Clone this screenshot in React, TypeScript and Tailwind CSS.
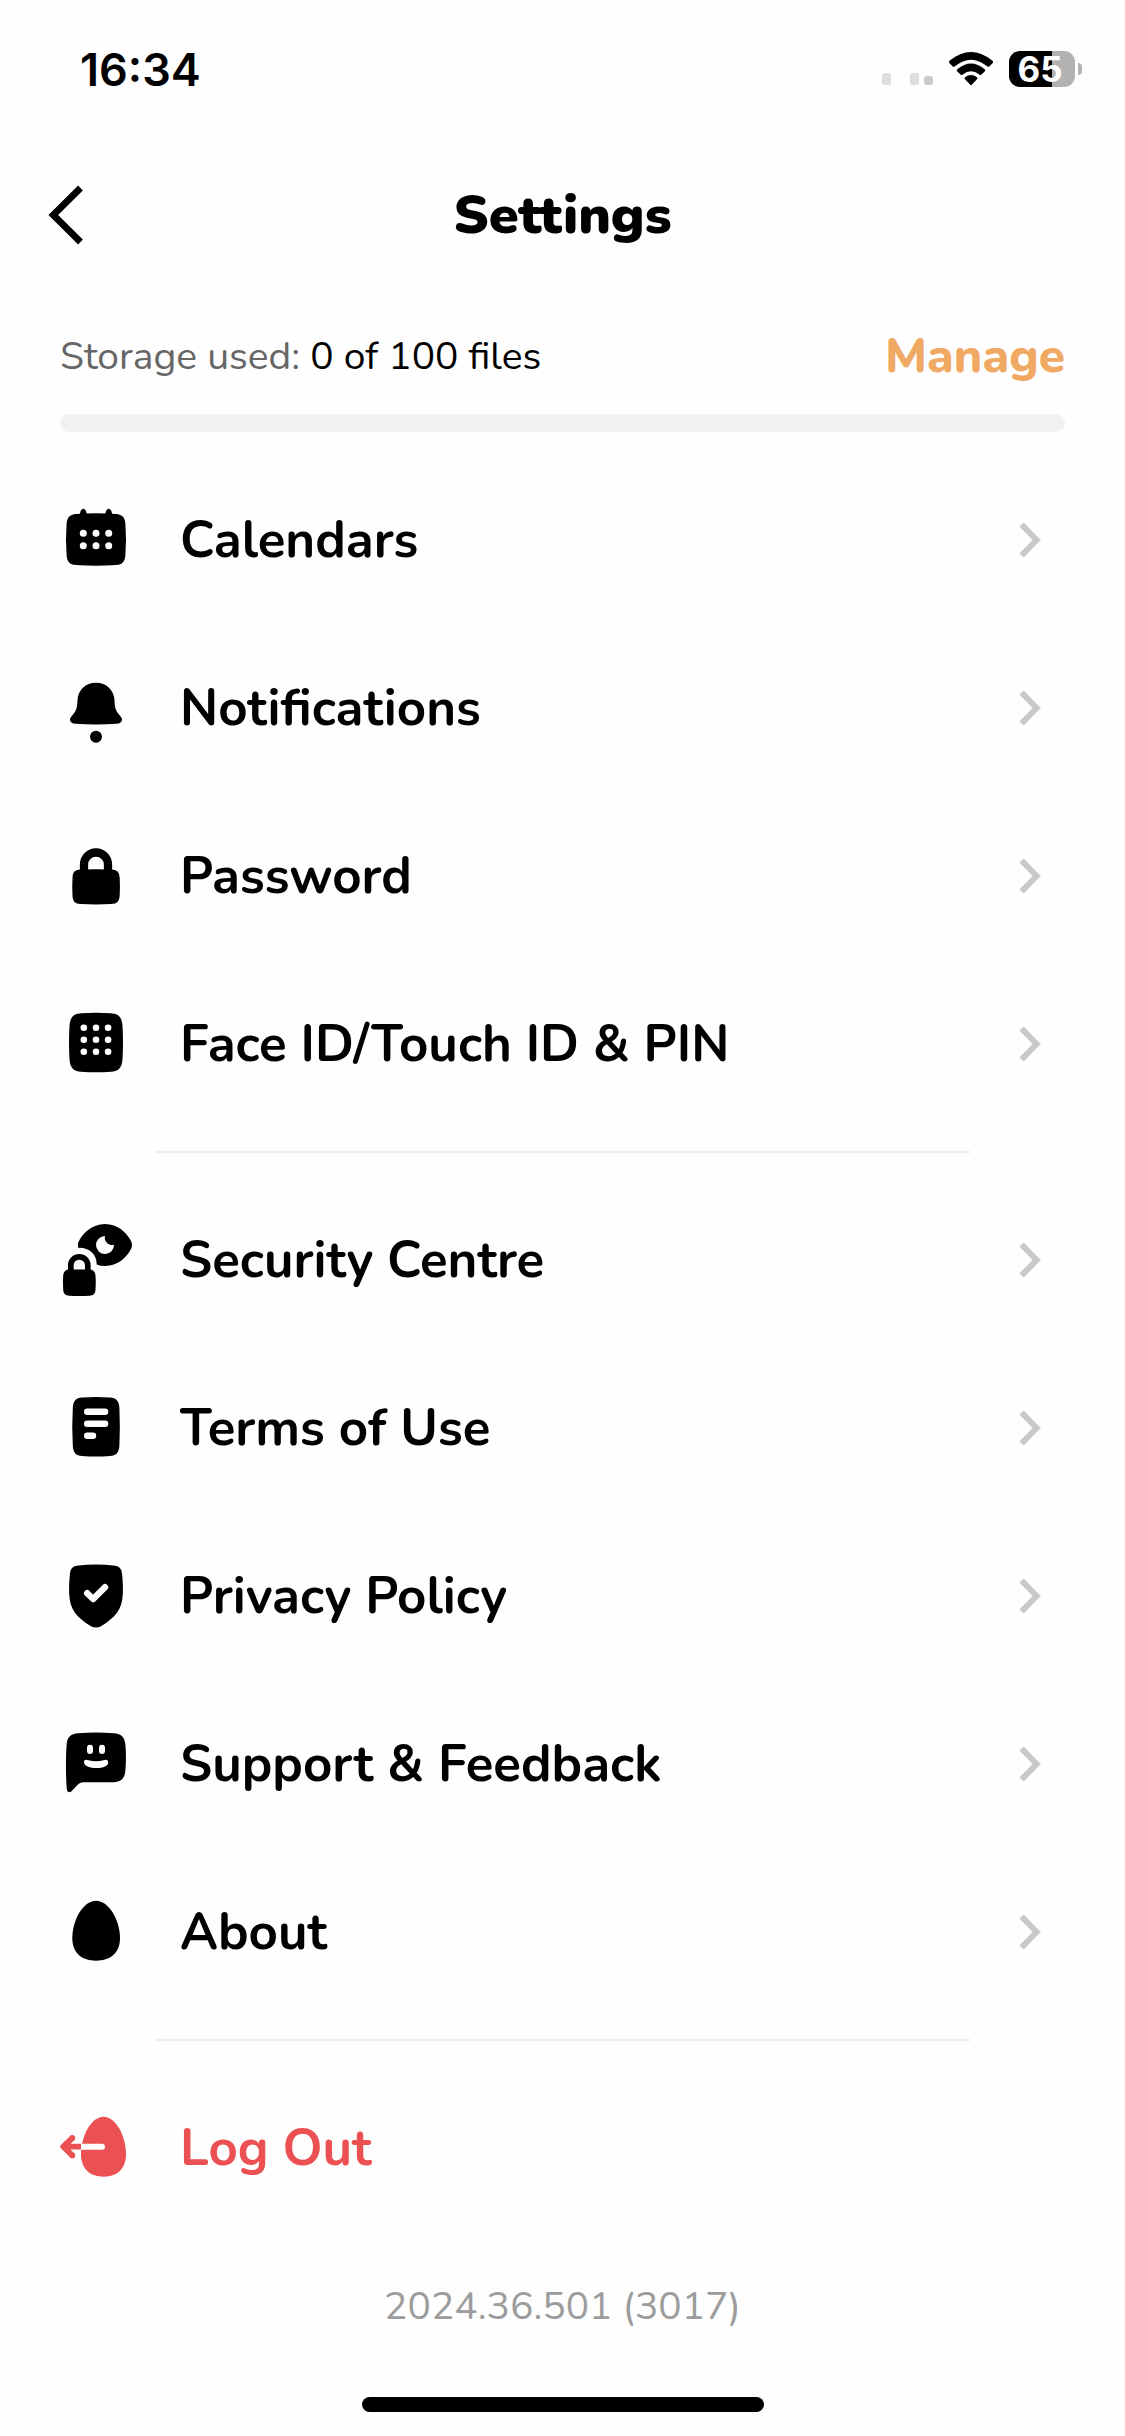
import type { ReactNode } from "react";

type Item = { label: string; icon: ReactNode };

function Icon({ children }: { children: ReactNode }) {
  return (
    <svg viewBox="0 0 72 72" className="size-18 shrink-0" fill="currentColor" aria-hidden="true">
      {children}
    </svg>
  );
}

function Dots({ xs, ys, r }: { xs: number[]; ys: number[]; r: number }) {
  return (
    <g fill="#fff">
      {ys.map((y) => xs.map((x) => <circle key={`${x}-${y}`} cx={x} cy={y} r={r} />))}
    </g>
  );
}

const calendarIcon = (
  <Icon>
    <path d="M6.6 20C7 13.5 9.5 10.4 16 9.9Q36 8.7 56 9.9C62.5 10.4 65 13.5 65.4 20Q66.6 35.5 65.4 51C65 57.5 62.5 60.6 56 61.1Q36 62.3 16 61.1C9.5 60.6 7 57.5 6.6 51Q5.4 35.5 6.6 20Z" />
    <path d="M19.5 11L20.7 6.8Q23.3 2.6 25.9 6.8L27.1 11ZM44.9 11L46.1 6.8Q48.7 2.6 51.3 6.8L52.5 11Z" />
    <Dots xs={[23.3, 36, 48.7]} ys={[29.3, 41.7]} r={3.5} />
  </Icon>
);

const bellIcon = (
  <Icon>
    <path d="M36 10.7C25.5 10.7 18 18 17.5 28C17.3 35 16.5 38.5 13 42.5C10.8 45 10 46 10 47.5C10 50.3 12 51.6 15.5 51.8Q36 53 56.5 51.8C60 51.6 62 50.3 62 47.5C62 46 61.2 45 59 42.5C55.5 38.5 54.7 35 54.5 28C54 18 46.5 10.7 36 10.7Z" />
    <circle cx="36" cy="64.7" r="6" />
  </Icon>
);

const lockIcon = (
  <Icon>
    <path d="M24 36V24.5a12 12 0 0 1 24 0V36" fill="none" stroke="#000" strokeWidth="8.3" />
    <path d="M20 29.6Q36 29 52 29.6C57.5 30 59.3 32.5 59.7 38Q60.2 47 59.7 55.5C59.3 61.5 57 63.7 51.5 64.1Q36 65 20.5 64.1C15 63.7 12.7 61.5 12.5 55.5Q12 47 12.5 38C12.7 32.5 14.5 30 20 29.6Z" />
  </Icon>
);

const keypadIcon = (
  <Icon>
    <path d="M9.5 18C10 9 13.5 5.7 21 5.2Q36 4.2 51 5.2C58.5 5.7 62 9 62.5 18Q63.5 34.5 62.5 51C62 60 58.5 63.3 51 63.8Q36 64.8 21 63.8C13.5 63.3 10 60 9.5 51Q8.5 34.5 9.5 18Z" />
    <Dots xs={[23.8, 36, 48.1]} ys={[19.7, 31.7, 43.7]} r={3.3} />
  </Icon>
);

const securityIcon = (
  <Icon>
    <path d="M18 23.7V19C22 9.5 32 0 45 0C58 0 66.5 8.5 71 17Q73 21 71 25C66.5 33.5 58 42 45 42Q40.5 42 36.6 40.4C37.2 30.5 29 23 18 23.7Z" />
    <path d="M45 12A9 9 0 1 0 54 20.8C49 22.3 43.5 17.5 45 12Z" fill="#fff" />
    <path d="M10.8 50V41.3a8.5 8.5 0 0 1 17 0V50" fill="none" stroke="#000" strokeWidth="5.7" />
    <path d="M9 45.6Q19.3 45.2 29.7 45.6C33.7 46 35.2 48 35.5 51.5Q36 58 35.5 65.5C35.2 69.7 33.5 71.5 29.5 71.8Q19.3 72.2 9.2 71.8C5.2 71.5 3.5 69.7 3.2 65.5Q2.8 58 3.2 51.5C3.5 48 5 46 9 45.6Z" />
  </Icon>
);

const termsIcon = (
  <Icon>
    <path d="M12.8 16C13.2 8.5 16 6 22 5.5Q36 4.5 50 5.5C56 6 59 8.5 59.4 16Q60.3 34.7 59.4 53.5C59 61 56 63.5 50 64Q36 65.2 22 64C16 63.5 13.2 61 12.8 53.5Q11.7 34.7 12.8 16Z" />
    <path d="M27.2 19.7H45.1M27.2 31.7H45.1M27.2 43.7H33" stroke="#fff" strokeWidth="6.4" strokeLinecap="round" />
  </Icon>
);

const shieldIcon = (
  <Icon>
    <path d="M9.8 15C10.3 8.5 12.5 6 18.5 5.5Q36 3.4 53.5 5.5C59.5 6 61.7 8.5 62.2 15Q63.3 25 62.8 34C62.3 49 55.5 57.5 41 66.2Q36 69 31 66.2C16.5 57.5 9.7 49 9.2 34Q8.7 25 9.8 15Z" />
    <path d="M27.2 33.2L33.2 39L45 27.2" fill="none" stroke="#fff" strokeWidth="6.4" strokeLinecap="round" strokeLinejoin="round" />
  </Icon>
);

const supportIcon = (
  <Icon>
    <path d="M6.6 16.5C7.2 9 11 5.7 18 5.2Q36 4 54 5.2C61 5.7 64.8 9 65.4 16.5Q66.5 29.5 65.4 42.5C64.8 50.5 61 53.8 54 54.2H23.5C20.5 54.2 19.5 55 17.5 56.9L12 62.7C9.5 65.5 6.8 64 6.7 60.5Q5.2 38 6.6 16.5Z" />
    <path d="M30 19.7V23M42 19.7V23" stroke="#fff" strokeWidth="6" strokeLinecap="round" />
    <path d="M24 34C24 31.4 26.5 31.3 28.5 32.2Q36 34.5 43.5 32.2C45.5 31.3 48.2 31.4 48.2 34.4C48.2 37.5 43.5 40 36 40C28.5 40 24 37.5 24 34Z" fill="#fff" />
  </Icon>
);

const eggIcon = (
  <Icon>
    <path d="M36 4.7C23 4.7 12.3 24.5 12.3 42C12.3 56 20.5 64.7 36 64.7C51.5 64.7 60 56 60 42C60 24.5 49 4.7 36 4.7Z" />
  </Icon>
);

const logOutIcon = (
  <Icon>
    <path d="M43.5 4.7C31 4.7 21 24.5 21 42C21 56 29 64.7 43.5 64.7C58 64.7 66 56 66 42C66 24.5 56 4.7 43.5 4.7Z" />
    <path d="M20.5 31.7H42a3 3 0 0 1 0 6H20.5Z" fill="#fff" />
    <path d="M21 34.7H4M12.5 25.8L3.3 34.7L12.5 43.6" fill="none" stroke="currentColor" strokeWidth="5.8" strokeLinejoin="round" />
    <circle cx="12.3" cy="26" r="2.9" />
    <circle cx="12.3" cy="43.4" r="2.9" />
  </Icon>
);

const accountItems: Item[] = [
  { label: "Calendars", icon: calendarIcon },
  { label: "Notifications", icon: bellIcon },
  { label: "Password", icon: lockIcon },
  { label: "Face ID/Touch ID & PIN", icon: keypadIcon },
];

const infoItems: Item[] = [
  { label: "Security Centre", icon: securityIcon },
  { label: "Terms of Use", icon: termsIcon },
  { label: "Privacy Policy", icon: shieldIcon },
  { label: "Support & Feedback", icon: supportIcon },
  { label: "About", icon: eggIcon },
];

function StatusBar() {
  return (
    <div className="flex h-[130px] items-center justify-between pt-2 pr-[43px] pl-20 font-['Inter',sans-serif]">
      <span className="text-[45px] leading-none font-semibold">16:34</span>
      <div className="flex items-center">
        <svg viewBox="0 0 52 36" className="h-9 w-[52px]" aria-hidden="true">
          <rect x="0" y="22" width="9" height="12" rx="2.5" fill="#dedede" />
          <rect x="28" y="22" width="9" height="12" rx="2.5" fill="#dedede" />
          <rect x="42" y="25" width="9" height="9" rx="3" fill="#cacaca" />
        </svg>
        <svg viewBox="0 0 46 36" className="ml-[14px] h-9 w-[46px]" aria-hidden="true">
          <path d="M1.5 9.8Q23 -7.8 44.5 9.8Q45.7 11 44.5 12.2L41.5 15.2Q40.3 16.2 39.1 15.2Q23 2.2 6.9 15.2Q5.7 16.2 4.5 15.2L1.5 12.2Q0.3 11 1.5 9.8Z" />
          <path d="M9.3 18.2Q23 6.6 36.7 18.2Q38 19.4 36.7 20.6L33.5 23.6Q32.4 24.6 31.2 23.6Q23 16.8 14.8 23.6Q13.6 24.6 12.5 23.6L9.3 20.6Q8 19.4 9.3 18.2Z" />
          <path d="M17 26.3Q23 21.6 29 26.3Q30 27.3 29 28.3L24 33.4Q23 34.4 22 33.4L17 28.3Q16 27.3 17 26.3Z" />
        </svg>
        <div className="ml-[15px] flex h-9 w-[66px] items-center justify-center rounded-[11px] bg-linear-to-r from-black from-65% to-[#b2b2b2] to-65% pr-1 text-[35px] leading-none font-bold text-white">
          65
        </div>
        <div className="ml-[3px] h-3 w-1 rounded-r-full bg-[#b2b2b2]" />
      </div>
    </div>
  );
}

function SettingsRow({ label, icon }: Item) {
  return (
    <li>
      <a href="#" className="flex h-42 items-center pr-6">
        {icon}
        <span className="ml-12 flex-1 text-[51px] leading-none font-bold">{label}</span>
        <svg viewBox="0 0 24 36" className="h-9 w-6" fill="none" stroke="#c9c9c9" strokeWidth="6" aria-hidden="true">
          <path d="M4.5 2.5L19.7 18L4.5 33.5" />
        </svg>
      </a>
    </li>
  );
}

function Divider() {
  return <hr className="my-[23px] mr-[95px] ml-24 border-t-2 border-[#eeeeee]" />;
}

export default function App() {
  return (
    <div className="flex min-h-screen flex-col bg-[#fefefe] font-['Nunito','Open_Sans',sans-serif] text-black">
      <StatusBar />

      <header className="grid h-[170px] grid-cols-[1fr_auto_1fr] items-center px-12">
        <button type="button" aria-label="Back" className="w-9">
          <svg viewBox="0 0 36 60" className="h-15 w-9" fill="none" stroke="#000" strokeWidth="6.7" aria-hidden="true">
            <path d="M32.5 3L5.2 30L32.5 57" />
          </svg>
        </button>
        <h1 className="text-[54px] leading-none font-black">Settings</h1>
      </header>

      <main className="px-15">
        <div className="flex h-[114px] items-center justify-between pb-[2px]">
          <p className="text-[39px] leading-none text-[#666666]">
            Storage used: <span className="text-black">0 of 100 files</span>
          </p>
          <a href="#" className="text-[48px] leading-none font-extrabold text-[#f0a963]">
            Manage
          </a>
        </div>
        <div
          role="progressbar"
          aria-label="Storage used"
          aria-valuemin={0}
          aria-valuemax={100}
          aria-valuenow={0}
          className="mb-6 h-[18px] rounded-full bg-[#f1f1f1]"
        />

        <ul>
          {accountItems.map((item) => (
            <SettingsRow key={item.label} {...item} />
          ))}
        </ul>
        <Divider />
        <ul>
          {infoItems.map((item) => (
            <SettingsRow key={item.label} {...item} />
          ))}
        </ul>
        <Divider />
        <button type="button" className="flex h-42 w-full items-center text-left text-[#eb5153]">
          {logOutIcon}
          <span className="ml-12 text-[51px] leading-none font-bold">Log Out</span>
        </button>
      </main>

      <footer className="mt-auto flex flex-col items-center pb-6">
        <p className="flex h-[165px] items-center pb-4 text-[39px] leading-none text-[#9c9c9c]">2024.36.501 (3017)</p>
        <div className="h-[15px] w-[402px] rounded-full bg-black" />
      </footer>
    </div>
  );
}
